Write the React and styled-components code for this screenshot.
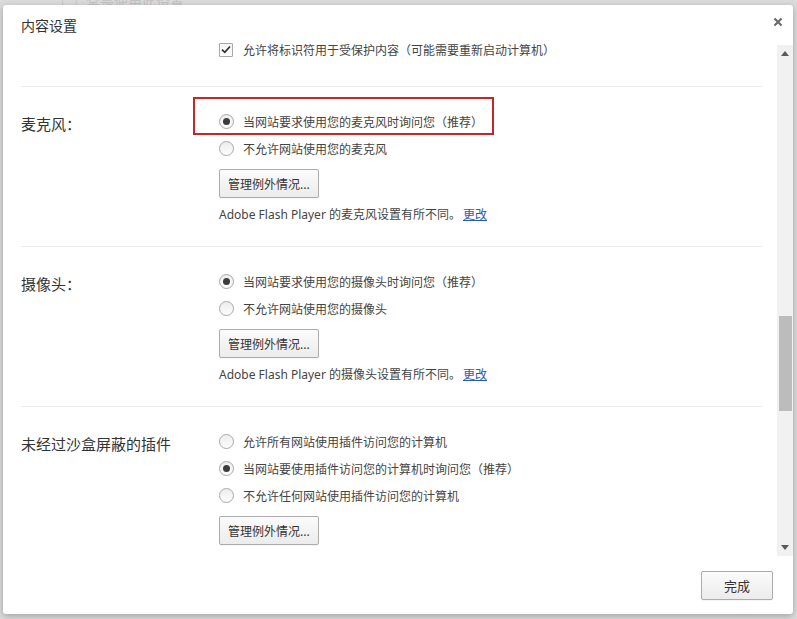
import React from 'react';
import styled, { createGlobalStyle } from 'styled-components';

const GlobalStyle = createGlobalStyle`
  html, body {
    margin: 0;
    padding: 0;
    background: #dcdcdc;
  }
  body {
    font-family: "Noto Sans", "Noto Sans CJK SC", sans-serif;
    color: #333;
  }
`;

const Page = styled.div`
  position: relative;
  width: 797px;
  height: 619px;
  padding: 5px 4px 5px 3px;
  box-sizing: border-box;
  overflow: hidden;
`;

const BehindText = styled.div`
  position: absolute;
  top: -9px;
  left: 62px;
  display: flex;
  align-items: center;
  gap: 9px;
  font-size: 14px;
  color: #c4c4c4;
`;

const BehindRadio = styled.span`
  width: 13px;
  height: 13px;
  border-radius: 50%;
  border: 1px solid #c8c8c8;
`;

const Dialog = styled.div`
  position: relative;
  width: 790px;
  height: 609px;
  background: #fff;
  border-radius: 3px;
  box-shadow: 0 2px 7px rgba(0, 0, 0, 0.28);
  display: flex;
  flex-direction: column;
  overflow: hidden;
`;

const Header = styled.div`
  height: 31px;
  display: flex;
  align-items: center;
  justify-content: space-between;
  padding: 0 8px 0 18px;
  flex-shrink: 0;
`;

const Title = styled.h1`
  margin: 8px 0 0;
  font-size: 14px;
  font-weight: 400;
  color: #333;
`;

const CloseButton = styled.button`
  border: none;
  background: transparent;
  padding: 0;
  width: 14px;
  height: 14px;
  margin-top: 2px;
  display: flex;
  align-items: center;
  justify-content: center;
  cursor: pointer;
`;

const ScrollArea = styled.div`
  height: 520px;
  display: flex;
  flex-shrink: 0;
`;

const Content = styled.div`
  flex: 1;
  overflow: hidden;
  padding: 0 15px 0 18px;
`;

const Section = styled.div`
  display: grid;
  grid-template-columns: 198px 1fr;
  padding: ${(p) => p.$pad || '21px 0 22px'};
  border-bottom: ${(p) => (p.$last ? 'none' : '1px solid #ececec')};
`;

const Label = styled.div`
  font-size: 15px;
  line-height: 27px;
  padding-top: 3px;
  color: #333;
`;

const Options = styled.div`
  display: flex;
  flex-direction: column;
  align-items: flex-start;
`;

const OptionRow = styled.label`
  position: relative;
  display: flex;
  align-items: center;
  height: 27px;
  font-size: 12px;
  color: #444;
  white-space: nowrap;
`;

const Radio = styled.span`
  width: 15px;
  height: 15px;
  box-sizing: border-box;
  border-radius: 50%;
  border: 1px solid #a8a8a8;
  background: linear-gradient(#ededed, #fdfdfd);
  margin-right: 9px;
  display: flex;
  align-items: center;
  justify-content: center;
  &::after {
    content: '';
    display: ${(p) => (p.$checked ? 'block' : 'none')};
    width: 7px;
    height: 7px;
    border-radius: 50%;
    background: #3c3c3c;
  }
`;

const Checkbox = styled.span`
  width: 14px;
  height: 14px;
  box-sizing: border-box;
  border: 1px solid #a8a8a8;
  border-radius: 1px;
  background: linear-gradient(#f4f4f4, #fff);
  margin-right: 10px;
  display: flex;
  align-items: center;
  justify-content: center;
`;

const Highlight = styled.span`
  position: absolute;
  top: -11px;
  left: -26px;
  width: 301px;
  height: 38px;
  box-sizing: border-box;
  border: 2px solid #c1272d;
  pointer-events: none;
`;

const Button = styled.button`
  font-family: inherit;
  font-size: 12px;
  color: #333;
  height: 29px;
  padding: 0 8px;
  margin-top: ${(p) => p.$mt || '7px'};
  border: 1px solid #acacac;
  border-radius: 2px;
  background: linear-gradient(#fbfbfb, #ececec);
  box-shadow: 0 1px 0 rgba(0, 0, 0, 0.04);
  cursor: pointer;
`;

const Note = styled.div`
  margin-top: 8px;
  font-size: 12px;
  line-height: 18px;
  color: #444;
`;

const Link = styled.a`
  color: #2a5db0;
  text-decoration: underline;
  margin-left: 2px;
  cursor: pointer;
`;

const ScrollTrack = styled.div`
  width: 16px;
  margin-top: 9px;
  background: #f1f1f1;
  display: flex;
  flex-direction: column;
  align-items: center;
  justify-content: space-between;
  position: relative;
`;

const Arrow = styled.div`
  height: 17px;
  display: flex;
  align-items: center;
  justify-content: center;
`;

const Thumb = styled.div`
  position: absolute;
  left: 2px;
  right: 1px;
  top: 271px;
  height: 95px;
  background: #bcbcbc;
`;

const Footer = styled.div`
  flex: 1;
  display: flex;
  justify-content: flex-end;
  align-items: flex-start;
  padding: 15px 20px 0 0;
`;

const DoneButton = styled(Button)`
  width: 72px;
  margin-top: 0;
  font-size: 13px;
`;

const Check = () => (
  <svg width="10" height="9" viewBox="0 0 10 9">
    <path d="M1 4.6 L3.8 7.3 L9 1.5" fill="none" stroke="#333" strokeWidth="1.8" />
  </svg>
);

const CloseIcon = () => (
  <svg width="10" height="10" viewBox="0 0 10 10">
    <path d="M1.5 1.5 L8.5 8.5 M8.5 1.5 L1.5 8.5" stroke="#6a6a6a" strokeWidth="2.2" />
  </svg>
);

const Tri = ({ down }) => (
  <svg width="8" height="5" viewBox="0 0 8 5">
    <path d={down ? 'M0 0 H8 L4 5 Z' : 'M0 5 H8 L4 0 Z'} fill="#5a5a5a" />
  </svg>
);

const Option = ({ checked, children, highlight }) => (
  <OptionRow>
    <Radio $checked={checked} />
    {children}
    {highlight && <Highlight />}
  </OptionRow>
);

export default function App() {
  return (
    <>
      <GlobalStyle />
      <Page>
        <BehindText>
          <BehindRadio />
          常是使用此设置
        </BehindText>
        <Dialog>
          <Header>
            <Title>内容设置</Title>
            <CloseButton aria-label="关闭">
              <CloseIcon />
            </CloseButton>
          </Header>
          <ScrollArea>
            <Content>
              <Section $pad="0 0 23px">
                <div />
                <Options>
                  <OptionRow>
                    <Checkbox>
                      <Check />
                    </Checkbox>
                    允许将标识符用于受保护内容（可能需要重新启动计算机）
                  </OptionRow>
                </Options>
              </Section>

              <Section>
                <Label>麦克风：</Label>
                <Options>
                  <Option checked highlight>
                    当网站要求使用您的麦克风时询问您（推荐）
                  </Option>
                  <Option>不允许网站使用您的麦克风</Option>
                  <Button>管理例外情况...</Button>
                  <Note>
                    Adobe Flash Player 的麦克风设置有所不同。
                    <Link>更改</Link>
                  </Note>
                </Options>
              </Section>

              <Section>
                <Label>摄像头：</Label>
                <Options>
                  <Option checked>当网站要求使用您的摄像头时询问您（推荐）</Option>
                  <Option>不允许网站使用您的摄像头</Option>
                  <Button>管理例外情况...</Button>
                  <Note>
                    Adobe Flash Player 的摄像头设置有所不同。
                    <Link>更改</Link>
                  </Note>
                </Options>
              </Section>

              <Section $last>
                <Label>未经过沙盒屏蔽的插件</Label>
                <Options>
                  <Option>允许所有网站使用插件访问您的计算机</Option>
                  <Option checked>当网站要使用插件访问您的计算机时询问您（推荐）</Option>
                  <Option>不允许任何网站使用插件访问您的计算机</Option>
                  <Button>管理例外情况...</Button>
                </Options>
              </Section>
            </Content>
            <ScrollTrack>
              <Arrow>
                <Tri />
              </Arrow>
              <Thumb />
              <Arrow>
                <Tri down />
              </Arrow>
            </ScrollTrack>
          </ScrollArea>
          <Footer>
            <DoneButton>完成</DoneButton>
          </Footer>
        </Dialog>
      </Page>
    </>
  );
}
